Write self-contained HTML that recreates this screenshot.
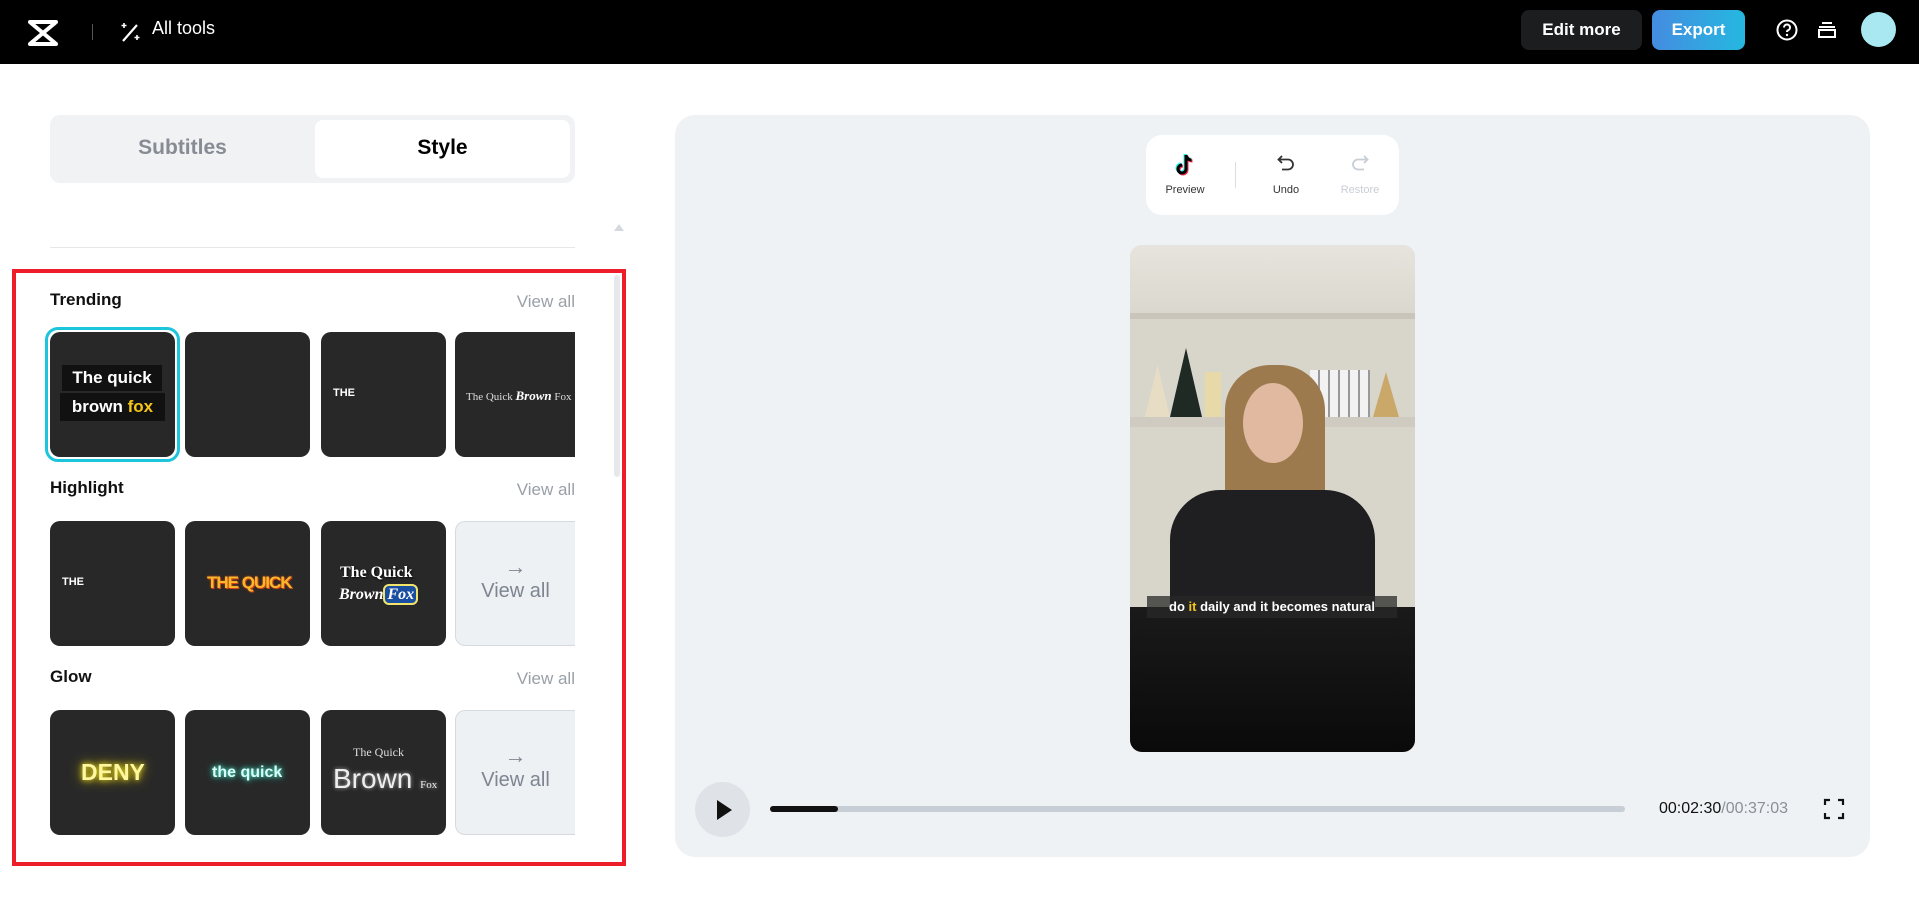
<!DOCTYPE html>
<html><head><meta charset="utf-8"><style>
*{box-sizing:border-box;margin:0;padding:0}
body{width:1919px;height:899px;background:#fff;font-family:"Liberation Sans",sans-serif;position:relative;overflow:hidden}
.abs{position:absolute}
.hdr{left:0;top:0;width:1919px;height:64px;background:#000}
.card{position:absolute;width:125px;height:125px;border-radius:10px;background:#282828;overflow:hidden;color:#fff}
.lbl{position:absolute;left:50px;font-size:17px;font-weight:bold;color:#111}
.va{position:absolute;right:1344px;font-size:17px;color:#9aa0a8}
.vcard{position:absolute;width:120px;height:125px;border-radius:10px 0 0 10px;background:#eef1f4;border:1px solid #d5dae0;border-right:none;color:#7d8590;text-align:center;font-size:20px}
</style></head><body>
<div class="abs hdr"></div>
<svg class="abs" style="left:27px;top:19px" width="32" height="28" viewBox="0 0 32 28"><path d="M3 3h26M3 25h26M4 4l24 20M28 4L4 24" stroke="#fff" stroke-width="4" fill="none" stroke-linecap="round"/></svg>
<div class="abs" style="left:92px;top:24px;width:1px;height:16px;background:#555"></div>
<svg class="abs" style="left:120px;top:20px" width="22" height="24" viewBox="0 0 22 24"><path d="M3 21L17 5" stroke="#fff" stroke-width="2.2"/><path d="M4 3v5M1.5 5.5h5M17 15v5M14.5 17.5h5" stroke="#fff" stroke-width="1.6"/></svg>
<div class="abs" style="left:152px;top:18px;color:#fff;font-size:18px">All tools</div>
<div class="abs" style="left:1521px;top:10px;width:121px;height:40px;border-radius:8px;background:#1c1d1f;color:#fff;font-weight:bold;font-size:17px;text-align:center;line-height:40px">Edit more</div>
<div class="abs" style="left:1652px;top:10px;width:93px;height:40px;border-radius:8px;background:linear-gradient(90deg,#448ce0,#25b8e0);color:#fff;font-weight:bold;font-size:17px;text-align:center;line-height:40px">Export</div>
<svg class="abs" style="left:1775px;top:18px" width="24" height="24" viewBox="0 0 24 24"><circle cx="12" cy="12" r="9.5" stroke="#fff" stroke-width="2" fill="none"/><path d="M9 9.5a3 3 0 1 1 4 2.8c-.8.4-1 .9-1 1.7" stroke="#fff" stroke-width="2" fill="none"/><circle cx="12" cy="17" r="1.2" fill="#fff"/></svg>
<svg class="abs" style="left:1815px;top:18px" width="24" height="24" viewBox="0 0 24 24"><path d="M7 5h10M4 9h16M4 12h16v7H4z" stroke="#fff" stroke-width="2" fill="none"/></svg>
<div class="abs" style="left:1861px;top:12px;width:35px;height:35px;border-radius:50%;background:#a9e8f0"></div>

<div class="abs" style="left:50px;top:115px;width:525px;height:68px;border-radius:10px;background:#f1f2f4"></div>
<div class="abs" style="left:315px;top:120px;width:255px;height:58px;border-radius:8px;background:#fff"></div>
<div class="abs" style="left:50px;top:136px;width:265px;text-align:center;font-size:21px;font-weight:bold;color:#878c94">Subtitles</div>
<div class="abs" style="left:315px;top:136px;width:255px;text-align:center;font-size:21px;font-weight:bold;color:#000">Style</div>
<div class="abs" style="left:614px;top:224px;border-left:5px solid transparent;border-right:5px solid transparent;border-bottom:7px solid #d5d9df"></div>
<div class="abs" style="left:50px;top:247px;width:525px;height:1px;background:#e5e7ea"></div>

<div class="abs" style="left:12px;top:269px;width:614px;height:597px;border:4px solid #ee1d2a"></div>
<div class="abs" style="left:614px;top:275px;width:6px;height:202px;border-radius:3px;background:#e6e8eb"></div>

<div class="lbl" style="top:290px">Trending</div><div class="va" style="top:292px">View all</div>
<div class="abs" style="left:45px;top:327px;width:135px;height:135px;border:3px solid #1cc4dc;border-radius:13px"></div>
<div class="card" style="left:50px;top:332px;">
<div class="abs" style="left:12px;top:33px;width:100px;height:26px;background:#111;font-weight:bold;font-size:17px;text-align:center;line-height:26px">The quick</div>
<div class="abs" style="left:10px;top:61px;width:105px;height:28px;background:#111;font-weight:bold;font-size:17px;text-align:center;line-height:28px">brown <span style="color:#f5c518">fox</span></div></div>
<div class="card" style="left:185px;top:332px"></div>
<div class="card" style="left:321px;top:332px"><div class="abs" style="left:12px;top:55px;font-size:11px;font-weight:bold">THE</div></div>
<div class="card" style="left:455px;top:332px;width:120px;border-radius:10px 0 0 10px"><div class="abs" style="left:11px;top:56px;font-size:11px;font-family:'Liberation Serif',serif;white-space:nowrap;color:#ddd">The Quick <b style="font-size:13px;font-style:italic;color:#fff">Brown</b> Fox</div></div>

<div class="lbl" style="top:478px">Highlight</div><div class="va" style="top:480px">View all</div>
<div class="card" style="left:50px;top:521px"><div class="abs" style="left:12px;top:55px;font-size:11px;font-weight:bold">THE</div></div>
<div class="card" style="left:185px;top:521px"><div class="abs" style="left:22px;top:52px;font-size:17px;font-weight:bold;color:#f7b92c;text-shadow:0 0 2px #e04a10,1px 1px 0 #d0401a;letter-spacing:-1px">THE QUICK</div></div>
<div class="card" style="left:321px;top:521px"><div class="abs" style="left:19px;top:43px;font-size:16px;font-weight:bold;font-family:'Liberation Serif',serif;text-shadow:1px 1px 2px #000">The Quick</div><div class="abs" style="left:18px;top:65px;font-size:16px;font-weight:bold;font-style:italic;font-family:'Liberation Serif',serif">Brown<span style="background:#1a4ea0;border:2px solid #f2e46a;border-radius:6px;padding:0 2px">Fox</span></div></div>
<div class="vcard" style="left:455px;top:521px"><div style="margin-top:32px;font-size:22px">→</div><div>View all</div></div>

<div class="lbl" style="top:667px">Glow</div><div class="va" style="top:669px">View all</div>
<div class="card" style="left:50px;top:710px"><div class="abs" style="left:31px;top:49px;font-size:23px;font-weight:bold;color:#fff7a0;text-shadow:0 0 6px #f0e020,0 0 12px #d8c000">DENY</div></div>
<div class="card" style="left:185px;top:710px"><div class="abs" style="left:27px;top:54px;font-size:16px;font-weight:bold;color:#d8fff8;text-shadow:0 0 4px #4fd8c0,0 0 8px #2bb8a0">the quick</div></div>
<div class="card" style="left:321px;top:710px"><div class="abs" style="left:32px;top:35px;font-size:12px;font-family:'Liberation Serif',serif;color:#ddd">The Quick</div><div class="abs" style="left:12px;top:53px;font-size:28px;font-family:'Liberation Sans',sans-serif;color:#eee;text-shadow:0 0 4px #aaa;white-space:nowrap">Brown <span style="font-size:11px;font-family:'Liberation Serif',serif">Fox</span></div></div>
<div class="vcard" style="left:455px;top:710px"><div style="margin-top:32px;font-size:22px">→</div><div>View all</div></div>

<div class="abs" style="left:675px;top:115px;width:1195px;height:742px;border-radius:20px;background:#eff2f5"></div>
<div class="abs" style="left:1146px;top:135px;width:253px;height:80px;border-radius:16px;background:#fff"></div>
<svg class="abs" style="left:1174px;top:153px" width="22" height="24" viewBox="0 0 22 24"><path d="M12 2v14a4 4 0 1 1-4-4M12 2c.5 3 2.5 5 5.5 5" stroke="#25f4ee" stroke-width="3" fill="none" transform="translate(-1,-1)"/><path d="M12 2v14a4 4 0 1 1-4-4M12 2c.5 3 2.5 5 5.5 5" stroke="#fe2c55" stroke-width="3" fill="none" transform="translate(1,1)"/><path d="M12 2v14a4 4 0 1 1-4-4M12 2c.5 3 2.5 5 5.5 5" stroke="#000" stroke-width="3" fill="none"/></svg>
<div class="abs" style="left:1160px;top:184px;width:50px;text-align:center;font-size:11px;color:#333">Preview</div>
<div class="abs" style="left:1235px;top:162px;width:1px;height:26px;background:#ddd"></div>
<svg class="abs" style="left:1276px;top:153px" width="20" height="20" viewBox="0 0 20 20"><path d="M6 3L2.5 6.5 6 10M3 6.5h9a5 5 0 0 1 0 10H6" stroke="#333" stroke-width="1.8" fill="none"/></svg>
<div class="abs" style="left:1261px;top:184px;width:50px;text-align:center;font-size:11px;color:#333">Undo</div>
<svg class="abs" style="left:1350px;top:153px" width="20" height="20" viewBox="0 0 20 20"><path d="M14 3l3.5 3.5L14 10M17 6.5H8a5 5 0 0 0 0 10h6" stroke="#c8ced6" stroke-width="1.8" fill="none"/></svg>
<div class="abs" style="left:1335px;top:184px;width:50px;text-align:center;font-size:11px;color:#c8ced6">Restore</div>

<div class="abs" style="left:1130px;top:245px;width:285px;height:507px;border-radius:12px;overflow:hidden;background:#d8d5cb">
<div class="abs" style="left:0;top:0;width:285px;height:70px;background:linear-gradient(#e6e4dc,#dad7ce)"></div>
<div class="abs" style="left:0;top:68px;width:285px;height:6px;background:#c9c5ba"></div>
<div class="abs" style="left:0;top:172px;width:285px;height:10px;background:#cfcbc0"></div>
<div class="abs" style="left:15px;top:120px;width:25px;height:52px;background:#e7dcc4;clip-path:polygon(50% 0,100% 100%,0 100%)"></div>
<div class="abs" style="left:40px;top:103px;width:32px;height:69px;background:#1f2a25;clip-path:polygon(50% 0,100% 100%,0 100%)"></div>
<div class="abs" style="left:75px;top:127px;width:16px;height:45px;background:#e8d9a8"></div>
<div class="abs" style="left:180px;top:125px;width:60px;height:47px;background:repeating-linear-gradient(90deg,#f2f2f2 0 8px,#999 8px 10px)"></div>
<div class="abs" style="left:243px;top:127px;width:26px;height:45px;background:#c9a86a;clip-path:polygon(50% 0,100% 100%,0 100%)"></div>
<div class="abs" style="left:95px;top:120px;width:100px;height:190px;border-radius:45px 45px 10px 10px;background:#9c7a4e"></div>
<div class="abs" style="left:113px;top:138px;width:60px;height:80px;border-radius:50%;background:#e1b9a0"></div>
<div class="abs" style="left:40px;top:245px;width:205px;height:140px;border-radius:50px 50px 0 0;background:#1f1e20"></div>
<div class="abs" style="left:0;top:362px;width:285px;height:145px;background:linear-gradient(#1a1a1a,#0a0a0a)"></div>
<div class="abs" style="left:17px;top:351px;width:250px;height:22px;background:rgba(40,40,40,.75);color:#fff;font-weight:bold;font-size:13px;text-align:center;line-height:22px;white-space:nowrap">do <span style="color:#f5c518">it</span> daily and it becomes natural</div>
</div>

<div class="abs" style="left:695px;top:782px;width:55px;height:55px;border-radius:50%;background:#dfe3e8"></div>
<div class="abs" style="left:717px;top:800px;border-top:10px solid transparent;border-bottom:10px solid transparent;border-left:15px solid #111"></div>
<div class="abs" style="left:770px;top:806px;width:855px;height:6px;border-radius:3px;background:#c8ced6"></div>
<div class="abs" style="left:770px;top:806px;width:68px;height:6px;border-radius:3px;background:#111"></div>
<div class="abs" style="left:1659px;top:800px;font-size:16px;color:#111">00:02:30<span style="color:#8a9099">/00:37:03</span></div>
<svg class="abs" style="left:1823px;top:798px" width="22" height="22" viewBox="0 0 22 22"><path d="M2 7V2h5M15 2h5v5M20 15v5h-5M7 20H2v-5" stroke="#111" stroke-width="2.2" fill="none"/></svg>
</body></html>
